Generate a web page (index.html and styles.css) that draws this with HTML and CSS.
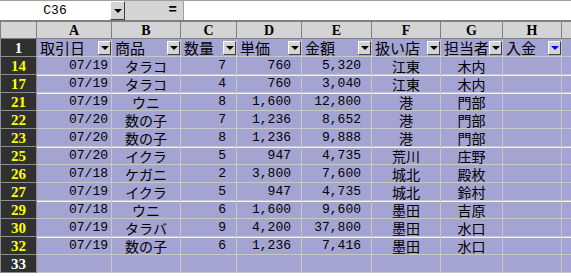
FILE: index.html
```html
<!DOCTYPE html>
<html lang="ja">
<head>
  <meta charset="UTF-8">
  <title>売上一覧</title>
  <link rel="stylesheet" href="styles.css">
</head>
<body>

  <!-- 数式バー -->
  <div class="formula-bar">
    <div class="name-box">C36</div>
    <div class="name-drop"><span class="tri"></span></div>
    <div class="fx-area"><span class="eq">=</span></div>
    <div class="fx-input"></div>
  </div>

  <!-- シート -->
  <table class="sheet">
    <colgroup>
      <col class="c-rn"><col class="c-a"><col class="c-b"><col class="c-c"><col class="c-d">
      <col class="c-e"><col class="c-f"><col class="c-g"><col class="c-h"><col class="c-i">
    </colgroup>
    <thead>
      <tr>
        <th class="corner"></th>
        <th>A</th><th>B</th><th>C</th><th>D</th><th>E</th><th>F</th><th>G</th><th>H</th><th></th>
      </tr>
    </thead>
    <tbody>
      <tr class="head">
        <th class="rn">1</th>
        <td><div class="fcell"><span>取引日</span><span class="fbtn"></span></div></td>
        <td><div class="fcell"><span>商品</span><span class="fbtn"></span></div></td>
        <td><div class="fcell"><span>数量</span><span class="fbtn"></span></div></td>
        <td><div class="fcell"><span>単価</span><span class="fbtn"></span></div></td>
        <td><div class="fcell"><span>金額</span><span class="fbtn"></span></div></td>
        <td><div class="fcell"><span>扱い店</span><span class="fbtn"></span></div></td>
        <td><div class="fcell"><span>担当者</span><span class="fbtn"></span></div></td>
        <td><div class="fcell"><span>入金</span><span class="fbtn on"></span></div></td>
        <td></td>
      </tr>
      <tr>
        <th class="rn hit">14</th><td class="date">07/19</td><td class="txt">タラコ</td>
        <td class="num">7</td><td class="num">760</td><td class="num">5,320</td>
        <td class="txt">江東</td><td class="txt">木内</td><td></td><td></td>
      </tr>
      <tr class="gap">
        <th class="rn hit">17</th><td class="date">07/19</td><td class="txt">タラコ</td>
        <td class="num">4</td><td class="num">760</td><td class="num">3,040</td>
        <td class="txt">江東</td><td class="txt">木内</td><td></td><td></td>
      </tr>
      <tr class="gap">
        <th class="rn hit">21</th><td class="date">07/19</td><td class="txt">ウニ</td>
        <td class="num">8</td><td class="num">1,600</td><td class="num">12,800</td>
        <td class="txt">港</td><td class="txt">門部</td><td></td><td></td>
      </tr>
      <tr>
        <th class="rn hit">22</th><td class="date">07/20</td><td class="txt">数の子</td>
        <td class="num">7</td><td class="num">1,236</td><td class="num">8,652</td>
        <td class="txt">港</td><td class="txt">門部</td><td></td><td></td>
      </tr>
      <tr>
        <th class="rn hit">23</th><td class="date">07/20</td><td class="txt">数の子</td>
        <td class="num">8</td><td class="num">1,236</td><td class="num">9,888</td>
        <td class="txt">港</td><td class="txt">門部</td><td></td><td></td>
      </tr>
      <tr class="gap">
        <th class="rn hit">25</th><td class="date">07/20</td><td class="txt">イクラ</td>
        <td class="num">5</td><td class="num">947</td><td class="num">4,735</td>
        <td class="txt">荒川</td><td class="txt">庄野</td><td></td><td></td>
      </tr>
      <tr>
        <th class="rn hit">26</th><td class="date">07/18</td><td class="txt">ケガニ</td>
        <td class="num">2</td><td class="num">3,800</td><td class="num">7,600</td>
        <td class="txt">城北</td><td class="txt">殿枚</td><td></td><td></td>
      </tr>
      <tr>
        <th class="rn hit">27</th><td class="date">07/19</td><td class="txt">イクラ</td>
        <td class="num">5</td><td class="num">947</td><td class="num">4,735</td>
        <td class="txt">城北</td><td class="txt">鈴村</td><td></td><td></td>
      </tr>
      <tr class="gap">
        <th class="rn hit">29</th><td class="date">07/18</td><td class="txt">ウニ</td>
        <td class="num">6</td><td class="num">1,600</td><td class="num">9,600</td>
        <td class="txt">墨田</td><td class="txt">吉原</td><td></td><td></td>
      </tr>
      <tr>
        <th class="rn hit">30</th><td class="date">07/19</td><td class="txt">タラバ</td>
        <td class="num">9</td><td class="num">4,200</td><td class="num">37,800</td>
        <td class="txt">墨田</td><td class="txt">水口</td><td></td><td></td>
      </tr>
      <tr class="gap">
        <th class="rn hit">32</th><td class="date">07/19</td><td class="txt">数の子</td>
        <td class="num">6</td><td class="num">1,236</td><td class="num">7,416</td>
        <td class="txt">墨田</td><td class="txt">水口</td><td></td><td></td>
      </tr>
      <tr>
        <th class="rn">33</th><td></td><td></td><td></td><td></td><td></td><td></td><td></td><td></td><td></td>
      </tr>
    </tbody>
  </table>

</body>
</html>
```

FILE: styles.css
```css
/* BASE */
* { box-sizing: border-box; margin: 0; padding: 0; }
body { background: #fff; overflow: hidden; width: 571px; height: 277px; }

/* FORMULA BAR */
.formula-bar {
  display: flex; height: 21px;
  border-top: 1px solid #a0a0a0; border-bottom: 1px solid #808080;
}
.name-box {
  width: 110px; background: #fff; text-align: center;
  font: 13px/19px "Liberation Mono", monospace; color: #000;
}
.name-drop {
  width: 15px; background: #d4d4d4;
  border: 1px solid; border-color: #fff #404040 #404040 #fff;
  display: flex; align-items: center; justify-content: center;
}
.tri {
  width: 0; height: 0;
  border-left: 4px solid transparent; border-right: 4px solid transparent;
  border-top: 4px solid #000;
}
.fx-area {
  width: 58px; background: #d4d4d4; text-align: right; padding-right: 6px;
  font: bold 14px/19px "Liberation Mono", monospace; color: #000;
}
.fx-input { flex: 1; background: #fff; border-left: 1px solid #a0a0a0; }

/* SHEET */
.sheet {
  border-collapse: collapse; table-layout: fixed; width: 571px;
  font-family: "Noto Sans CJK JP", sans-serif; font-size: 14px; color: #000;
}
.c-rn { width: 36px; }
.c-a { width: 75px; }
.c-b { width: 69px; }
.c-c { width: 56px; }
.c-d { width: 65px; }
.c-e { width: 70px; }
.c-f { width: 69px; }
.c-g { width: 62px; }
.c-h { width: 59px; }
.c-i { width: 10px; }

.sheet thead th {
  height: 17px; background: #d4d4d4; border: 1px solid #808080;
  font: bold 14px/15px "Liberation Serif", serif; text-align: center;
}
.sheet tbody td {
  height: 18px; background: #a4a4d2; border: 1px solid #c8c8c8;
  line-height: 16px; white-space: nowrap; overflow: hidden;
}
.sheet tbody tr.gap td { box-shadow: inset 0 1px 0 #f4f4f4; }

/* ROW NUMBERS */
.rn {
  background: #303030; color: #fff; text-align: center;
  border: 1px solid #8c8c8c;
  font: bold 15px/16px "Liberation Serif", serif;
}
.rn.hit { color: #ffff00; }

/* CELLS */
.date, .num { text-align: right; font: 13px/16px "Liberation Mono", monospace; }
.date { padding-right: 3px; }
.num { padding-right: 10px; }
.txt { text-align: center; }

/* AUTOFILTER HEADER */
.fcell {
  display: flex; align-items: center; height: 16px;
  padding-left: 3px; font-size: 15px; line-height: 16px;
}
.fbtn {
  margin-left: auto; flex: none; width: 13px; height: 14px; background: #d4d4d4;
  border: 1px solid; border-color: #fff #404040 #404040 #fff;
  display: flex; align-items: center; justify-content: center;
}
.fbtn::after {
  content: ""; width: 0; height: 0;
  border-left: 4px solid transparent; border-right: 4px solid transparent;
  border-top: 4px solid #000;
}
.fbtn.on::after { border-top-color: #0000ff; }
```
